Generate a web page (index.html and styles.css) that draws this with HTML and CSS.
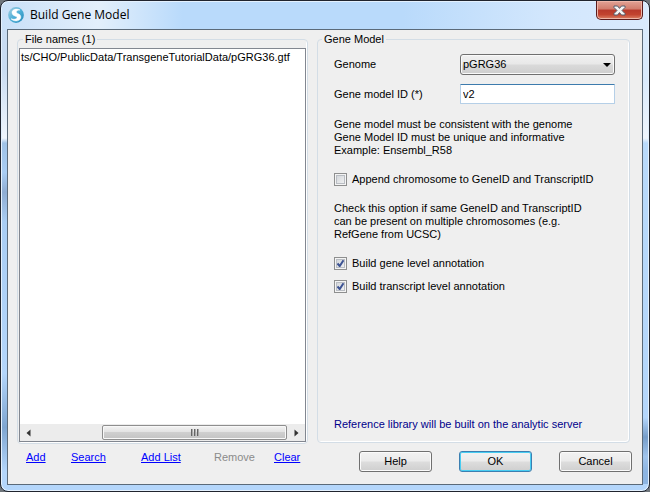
FILE: index.html
```html
<!DOCTYPE html>
<html lang="en">
<head>
<meta charset="utf-8">
<title>Build Gene Model</title>
<link rel="stylesheet" href="styles.css">
</head>
<body>
<div class="window">
  <header class="titlebar">
    <svg class="logo" viewBox="0 0 16 16" aria-hidden="true">
      <defs>
        <linearGradient id="ball" x1="0" y1="0" x2="1" y2="1">
          <stop offset="0" stop-color="#a9cfe0"/>
          <stop offset=".5" stop-color="#4fb0d8"/>
          <stop offset="1" stop-color="#2088b8"/>
        </linearGradient>
      </defs>
      <circle cx="8" cy="8" r="7.9" fill="url(#ball)"/>
      <path d="M12 3C9 1 3.600 2.400 4 6C4.400 9.400 9.200 8.800 9 10.600C8.800 12.200 6 12.800 3 11.800C7 15.600 13 14 12.800 9.800C12.600 6.300 8 6.800 8.200 5C8.400 3.600 10.200 3 12 3Z" fill="#fff" stroke="#fff" stroke-width=".5"/>
    </svg>
    <h1 class="title">Build Gene Model</h1>
    <button class="close" type="button" aria-label="Close">
      <svg viewBox="0 0 13 11" aria-hidden="true">
        <path d="M1 1h3.500l2 2.400L8.500 1H12v1.500L9 5.500l3 3V10H8.500l-2-2.400L4.500 10H1V8.500l3-3-3-3z" fill="#f5f5f5" stroke="#555e6e" stroke-width="1"/>
      </svg>
    </button>
  </header>
  <form class="client">
    <section class="column">
      <fieldset class="group files">
        <legend>File names (1)</legend>
        <div class="listbox">
          <ul class="items">
            <li>ts/CHO/PublicData/TransgeneTutorialData/pGRG36.gtf</li>
          </ul>
          <div class="scrollbar">
            <svg class="arrow" viewBox="0 0 5 8" aria-hidden="true"><path d="M4.500 0.500v7L0.500 4z"/></svg>
            <div class="track"><div class="thumb"><i></i><i></i><i></i></div></div>
            <svg class="arrow" viewBox="0 0 5 8" aria-hidden="true"><path d="M0.500 0.500v7L4.500 4z"/></svg>
          </div>
        </div>
      </fieldset>
      <nav class="links">
        <a href="#add">Add</a>
        <a href="#search">Search</a>
        <a href="#add-list">Add List</a>
        <span class="disabled">Remove</span>
        <a href="#clear">Clear</a>
      </nav>
    </section>
    <section class="column">
      <fieldset class="group">
        <legend>Gene Model</legend>
        <div class="model">
          <div class="fields">
            <label for="genome">Genome</label>
            <div class="combo">
              <select id="genome"><option>pGRG36</option></select>
              <svg class="caret" viewBox="0 0 8 4" aria-hidden="true"><path d="M0 0h8L4 4z"/></svg>
            </div>
            <label for="model-id">Gene model ID (*)</label>
            <input class="text" id="model-id" type="text" value="v2">
          </div>
          <p class="note">Gene model must be consistent with the genome<br>Gene Model ID must be unique and informative<br>Example: Ensembl_R58</p>
          <label class="check"><input type="checkbox">Append chromosome to GeneID and TranscriptID</label>
          <p class="note">Check this option if same GeneID and TranscriptID<br>can be present on multiple chromosomes (e.g.<br>RefGene from UCSC)</p>
          <label class="check"><input type="checkbox" checked>Build gene level annotation</label>
          <label class="check"><input type="checkbox" checked>Build transcript level annotation</label>
          <p class="server">Reference library will be built on the analytic server</p>
        </div>
      </fieldset>
      <div class="actions">
        <button class="button" type="button">Help</button>
        <button class="button primary" type="button">OK</button>
        <button class="button" type="button">Cancel</button>
      </div>
    </section>
  </form>
</div>
</body>
</html>
```
FILE: styles.css
```css
* {
  box-sizing: border-box;
}

body {
  margin: 0;
  background: #70767c;
  color: #000;
  font: 11px/13px "Liberation Sans", Arial, sans-serif;
}

.window {
  display: flex;
  flex-direction: column;
  min-height: 100vh;
  padding: 0 6px 6px;
  border: 1px solid #20242e;
  border-radius: 8px;
  box-shadow: inset 0 0 0 1px #e4f1fe;
  background:
    linear-gradient(90deg, #c9e0f8, #e3effb 15%, #b9dafb 28%, #b9dafb 62%, #d3e7fd 85%, #d9eafd) 0 0 / 100% 29px no-repeat,
    linear-gradient(#b4d6fb, #b4d6fb) 0 100% / 100% 7px no-repeat,
    linear-gradient(#d9eafd 16%, #f0f6fd 28%, #b9dafb 29%, #b4d6fb 85%, #769dc9 89%, #a0c4ec 93%, #8db5e2 96%) 100% 0 / 7px 100% no-repeat,
    linear-gradient(#c9dcf2 14%, #f0f6fd 28%, #9fc2e6 29%, #a9cdf3 35%, #8fadd3 39%, #a9cdf3 45%, #b4d6fb 76%, #7ea5d0 87%, #b4d6fb 96%);
}

.titlebar {
  display: flex;
  flex: none;
  align-items: center;
  height: 28px;
}

.logo {
  width: 16px;
  height: 16px;
  margin-left: 1px;
}

.title {
  flex: 1;
  margin: 0 0 0 6px;
  font: 12px/16px "Open Sans", "Noto Sans", sans-serif;
}

.close {
  display: flex;
  align-self: flex-start;
  justify-content: center;
  width: 47px;
  height: 19px;
  padding: 4px 0 0;
  border: 1px solid #5a1b1c;
  border-top: 0;
  border-radius: 0 0 5px 5px;
  box-shadow: inset 0 0 0 1px #eeb6a8;
  background: linear-gradient(#e2a396, #d17c6c 45%, #b8392b 50%, #c2432f 75%, #dc8064);
}

.close svg {
  width: 13px;
  height: 11px;
}

.client {
  display: grid;
  flex: 1;
  grid-template-columns: 291fr 313fr;
  gap: 9px;
  padding: 3px 12px 12px 9px;
  border: 1px solid #5b6a79;
  background: #efefef;
}

.column {
  display: flex;
  flex-direction: column;
  min-width: 0;
}

.group {
  display: flex;
  flex: 1;
  flex-direction: column;
  min-width: 0;
  margin: 0;
  padding: 0;
  border: 1px solid #d3dde6;
  border-radius: 4px;
  box-shadow: inset -1px -1px #fff;
}

.group legend {
  margin-left: 4px;
  padding: 0 2px;
}

.files {
  padding: 2px 1px 1px;
}

.listbox {
  display: flex;
  flex: 1;
  flex-direction: column;
  border: 1px solid #828790;
  background: #fff;
}

.items {
  flex: 1;
  margin: 0;
  padding: 2px 1px;
  list-style: none;
  white-space: nowrap;
}

.scrollbar {
  display: flex;
  align-items: center;
  height: 17px;
  padding: 0 6px;
  background: #ececec;
}

.arrow {
  width: 5px;
  height: 8px;
  fill: #333;
}

.track {
  display: flex;
  flex: 1;
  justify-content: flex-end;
  height: 15px;
  margin: 0 7px 0 6px;
}

.thumb {
  display: flex;
  align-items: center;
  justify-content: center;
  gap: 1px;
  width: 74%;
  border: 1px solid #8e8e8e;
  border-radius: 2px;
  box-shadow: inset 0 0 0 1px #f8f8f8;
  background: linear-gradient(#f3f3f3, #e3e3e3 45%, #cfcfcf 50%, #c3c3c3);
}

.thumb i {
  width: 2px;
  height: 7px;
  border-left: 1px solid #666;
  border-right: 1px solid #aaa;
}

.links {
  display: grid;
  grid-template-columns: 45px 70px 73px 60px auto;
  padding: 7px 0 8px 9px;
}

.links a {
  color: #00f;
}

.disabled {
  color: #8b8b8b;
}

.model {
  display: flex;
  flex: 1;
  flex-direction: column;
  padding: 8px 14px 11px 16px;
}

.fields {
  display: grid;
  grid-template-columns: 126px 1fr;
  row-gap: 9px;
  align-items: center;
}

.combo {
  display: grid;
  align-items: center;
}

.combo > * {
  grid-area: 1 / 1;
}

.combo select {
  width: 100%;
  height: 21px;
  padding: 0 2px;
  border: 1px solid #707070;
  border-radius: 3px;
  box-shadow: inset 0 0 0 1px #fafafa;
  background: linear-gradient(#f1f1f1, #e8e8e8 48%, #dadada 52%, #cecece);
  color: #000;
  font: inherit;
  appearance: none;
}

.caret {
  justify-self: end;
  width: 8px;
  height: 4px;
  margin-right: 4px;
  pointer-events: none;
}

.text {
  width: 100%;
  height: 20px;
  padding: 0 2px;
  border: 1px solid #b5cfe7;
  border-top-color: #3d7bad;
  border-radius: 1px;
  background: #fff;
  color: #000;
  font: inherit;
}

.note {
  margin: 14px 0 16px;
  white-space: nowrap;
}

.check {
  display: flex;
  align-items: center;
  gap: 5px;
  white-space: nowrap;
}

.check + .note {
  margin: 16px 0;
}

.check + .check {
  margin-top: 10px;
}

.check input {
  width: 13px;
  height: 13px;
  margin: 0;
  border: 1px solid #8e8f8f;
  box-shadow: inset 0 0 0 1px #f4f4f4, inset 0 0 0 2px #b9bdc3;
  background: linear-gradient(135deg, #cdd1d6, #f6f6f6);
  appearance: none;
}

.check input:checked {
  background:
    url("data:image/svg+xml,%3Csvg xmlns='http://www.w3.org/2000/svg' viewBox='0 0 11 11'%3E%3Cpath d='M2.500 5.500L4.700 8L8.500 2.200' fill='none' stroke='%233d5393' stroke-width='2'/%3E%3C/svg%3E"),
    linear-gradient(135deg, #cdd1d6, #f6f6f6);
}

.server {
  margin: auto 0 0;
  color: #00008b;
}

.actions {
  display: flex;
  justify-content: flex-end;
  gap: 27px;
  margin: 8px -2px 0 0;
}

.button {
  width: 73px;
  height: 21px;
  padding: 0;
  border: 1px solid #707070;
  border-radius: 3px;
  box-shadow: inset 0 0 0 1px #fbfbfb;
  background: linear-gradient(#f2f2f2, #ebebeb 48%, #dddddd 52%, #cfcfcf);
  color: #000;
  font: inherit;
}

.primary {
  border-color: #3c7fb1;
  box-shadow: inset 0 0 0 1px #48cdf2;
}
```
